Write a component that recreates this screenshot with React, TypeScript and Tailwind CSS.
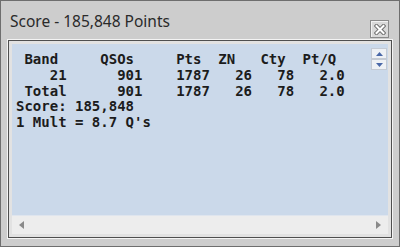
import React from 'react';

const rows = [
  ' Band     QSOs     Pts  ZN   Cty  Pt/Q',
  '    21      901    1787   26   78   2.0',
  ' Total      901    1787   26   78   2.0',
  'Score: 185,848',
  "1 Mult = 8.7 Q's",
];

function CloseButton() {
  return (
    <div className="w-[19px] h-[18px] border border-[#8a8a8a] bg-[#d9d9d9] flex items-center justify-center shadow-[inset_1px_1px_0_#f2f2f2]">
      <svg width="12" height="11" viewBox="0 0 12 11">
        <path d="M2.5 2 L9.5 9 M9.5 2 L2.5 9" stroke="#707070" strokeWidth="4" strokeLinecap="square" />
        <path d="M2.5 2 L9.5 9 M9.5 2 L2.5 9" stroke="#ffffff" strokeWidth="2" strokeLinecap="square" />
      </svg>
    </div>
  );
}

function SpinButton({ up }: { up: boolean }) {
  return (
    <div className="w-[16px] h-[11px] border border-[#c4cad3] bg-[#eef1f5] flex items-center justify-center">
      <svg width="7" height="4" viewBox="0 0 7 4">
        <path d={up ? 'M0 4 L3.5 0 L7 4 Z' : 'M0 0 L3.5 4 L7 0 Z'} fill="#4a68a8" />
      </svg>
    </div>
  );
}

export default function App() {
  return (
    <div className="w-[400px] h-[247px] border border-[#6e6e6e] bg-[#cdcdcd] flex flex-col overflow-hidden">
      <div className="h-[38px] flex items-start justify-between pl-[9px] pr-[9px]">
        <div className="pt-[10px] text-[15.5px] leading-[20px] text-[#2a2a2a]" style={{ fontFamily: '"Noto Sans", sans-serif' }}>
          Score - 185,848 Points
        </div>
        <div className="pt-[19px] pr-[1px]">
          <CloseButton />
        </div>
      </div>
      <div className="ml-[6px] w-[386px] h-[200px] border border-[#f4f4f4]">
        <div className="w-full h-full border border-[#4f4f4f] bg-[#e2e2e2] p-[3px]">
          <div className="w-full h-full flex flex-col">
            <div className="flex-1 bg-[#cbd9ea] flex pl-[4px]">
              <pre
                className="flex-1 pt-[8px] text-[14px] leading-[15.8px] font-bold text-[#1c1c1c]"
                style={{ fontFamily: '"DejaVu Sans Mono", monospace' }}
              >
                {rows.join('\n')}
              </pre>
              <div className="flex flex-col pt-[4px] pr-[1px]">
                <SpinButton up />
                <SpinButton up={false} />
              </div>
            </div>
            <div className="h-[19px] bg-[#ededed] border-t border-[#dfe5ee] flex items-center justify-between px-[7px]">
              <svg width="5" height="8" viewBox="0 0 5 8">
                <path d="M5 0 L0 4 L5 8 Z" fill="#8a8a8a" />
              </svg>
              <svg width="5" height="8" viewBox="0 0 5 8">
                <path d="M0 0 L5 4 L0 8 Z" fill="#8a8a8a" />
              </svg>
            </div>
          </div>
        </div>
      </div>
    </div>
  );
}
